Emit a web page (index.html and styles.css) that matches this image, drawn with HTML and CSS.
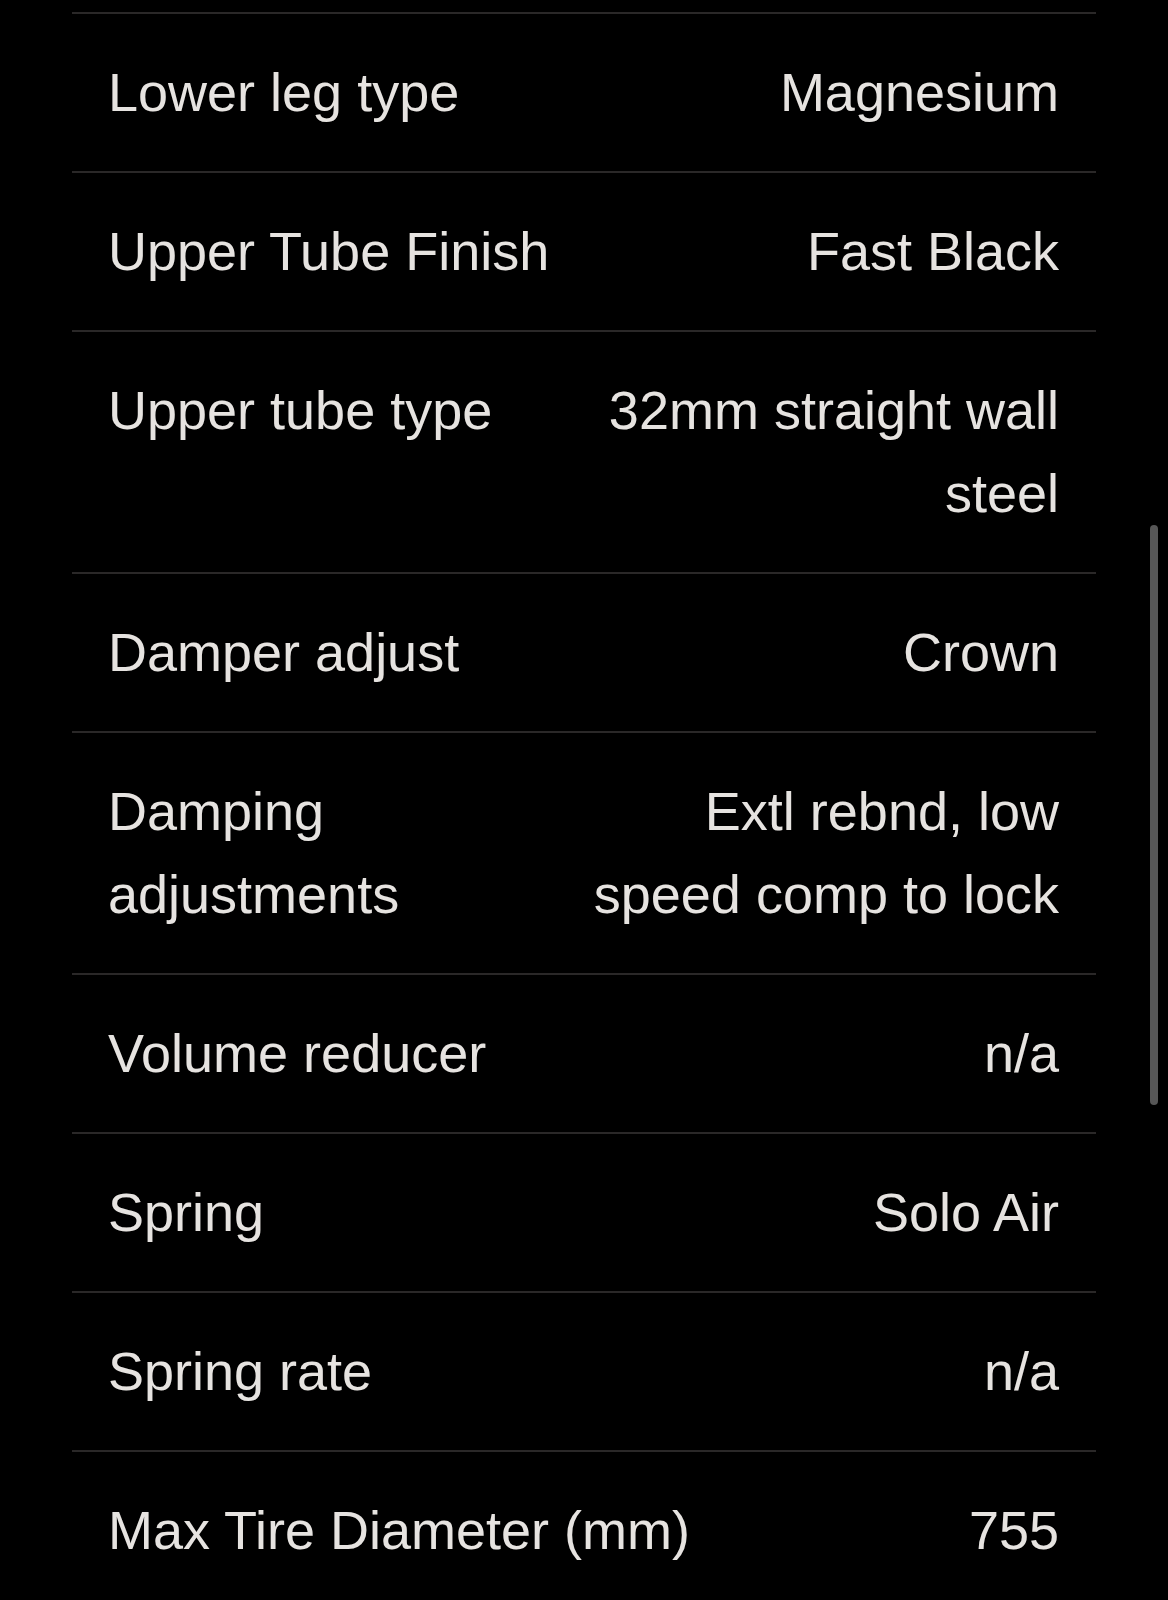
FILE: index.html
```html
<!DOCTYPE html>
<html lang="en">
<head>
    <meta charset="UTF-8">
    <meta name="viewport" content="width=device-width, initial-scale=1.0">
    <title>Fork Specifications</title>
    <link rel="stylesheet" href="styles.css">
</head>
<body>
    <div class="specs">
        <div class="spec-row">
            <div class="spec-label">Lower leg type</div>
            <div class="spec-value">Magnesium</div>
        </div>
        <div class="spec-row">
            <div class="spec-label">Upper Tube Finish</div>
            <div class="spec-value">Fast Black</div>
        </div>
        <div class="spec-row">
            <div class="spec-label">Upper tube type</div>
            <div class="spec-value">32mm straight wall steel</div>
        </div>
        <div class="spec-row">
            <div class="spec-label">Damper adjust</div>
            <div class="spec-value">Crown</div>
        </div>
        <div class="spec-row">
            <div class="spec-label">Damping adjustments</div>
            <div class="spec-value">Extl rebnd, low speed comp to lock</div>
        </div>
        <div class="spec-row">
            <div class="spec-label">Volume reducer</div>
            <div class="spec-value">n/a</div>
        </div>
        <div class="spec-row">
            <div class="spec-label">Spring</div>
            <div class="spec-value">Solo Air</div>
        </div>
        <div class="spec-row">
            <div class="spec-label">Spring rate</div>
            <div class="spec-value">n/a</div>
        </div>
        <div class="spec-row">
            <div class="spec-label">Max Tire Diameter (mm)</div>
            <div class="spec-value">755</div>
        </div>
    </div>

    <div class="scroll-thumb"></div>
</body>
</html>
```

FILE: styles.css
```css
html {
    height: 1600px;
    overflow: hidden;
}
body {
    font-family: "Liberation Sans", Arial, sans-serif;
    background-color: #000;
    color: #e6e3e0;
    margin: 0;
    position: relative;
    height: 1600px;
}
.specs {
    width: 1024px;
    margin-left: 72px;
    padding-top: 12px;
}
.spec-row {
    display: flex;
    justify-content: space-between;
    border-top: 2px solid #2a2828;
    padding: 37px 37px 37px 36px;
    font-size: 54px;
    line-height: 83px;
}
.spec-label {
    flex: 1 1 auto;
    min-width: 0;
    padding-right: 20px;
}
.spec-value {
    flex: 0 0 auto;
    max-width: 480px;
    text-align: right;
}
.scroll-thumb {
    position: absolute;
    left: 1150px;
    top: 525px;
    width: 8px;
    height: 580px;
    border-radius: 4px;
    background-color: #575757;
}
```
